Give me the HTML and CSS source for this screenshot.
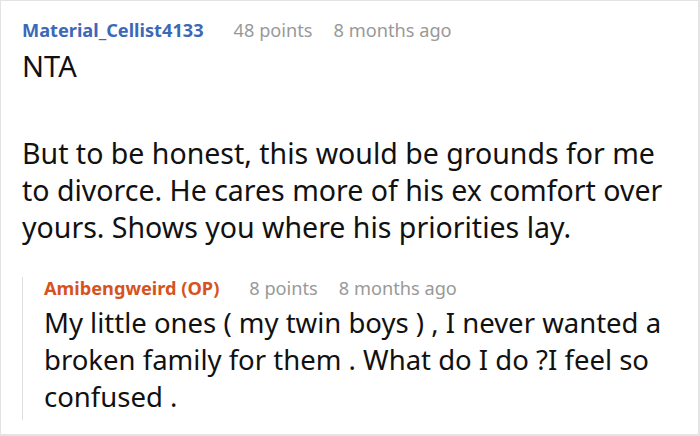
FILE: index.html
```html
<!DOCTYPE html>
<html lang="en">
<head>
<meta charset="utf-8">
<title>Comment thread</title>
<link rel="stylesheet" href="styles.css">
</head>
<body>
<div class="thread">
  <article class="comment">
    <header class="meta">
      <span class="author">Material_Cellist4133</span>
      <span class="score">48 points</span>
      <span class="age">8 months ago</span>
    </header>
    <div class="body">
      <p class="short">NTA</p>
      <p>But to be honest, this would be grounds for me to divorce. He cares more of his ex comfort over yours. Shows you where his priorities lay.</p>
    </div>
    <div class="replies">
      <article class="comment reply">
        <header class="meta">
          <span class="author op">Amibengweird (OP)</span>
          <span class="score">8 points</span>
          <span class="age">8 months ago</span>
        </header>
        <div class="body">
          <p>My little ones ( my twin boys ) , I never wanted a broken family for them . What do I do ?I feel so confused .</p>
        </div>
      </article>
    </div>
  </article>
</div>
</body>
</html>
```

FILE: styles.css
```css
html, body {
  margin: 0;
  padding: 0;
  background: #fff;
}

body {
  font-family: "Noto Sans", "Open Sans", sans-serif;
  color: #111;
}

.thread {
  box-sizing: border-box;
  width: 700px;
  height: 436px;
  border: 1px solid #e3e3e3;
  border-right-width: 2px;
  border-bottom-width: 2px;
  padding: 15px 33px 0 21px;
  overflow: hidden;
}

/* author / score / age line */
.meta {
  display: flex;
  align-items: baseline;
  gap: 0 21px;
  font-size: 18.2px;
  line-height: 28px;
  color: #999;
}

.author {
  font-weight: 700;
  color: #3b69b8;
  margin-right: 9px;
}

.author.op {
  color: #d6531d;
}

.body p {
  margin: 0;
  font-size: 28.5px;
  line-height: 37px;
}

.body .short {
  margin-top: 3px;
  font-size: 29px;
}

.body p + p {
  margin-top: 51px;
}

/* nested replies hang off a thin guide line */
.replies {
  margin-top: 38px;
  border-left: 1px solid #dedede;
  padding: 0 0 5px 21px;
}

.reply .meta {
  line-height: 22px;
  margin-top: -7px;
}

.reply .body p {
  margin-top: 5px;
  font-size: 27.5px;
}
```
